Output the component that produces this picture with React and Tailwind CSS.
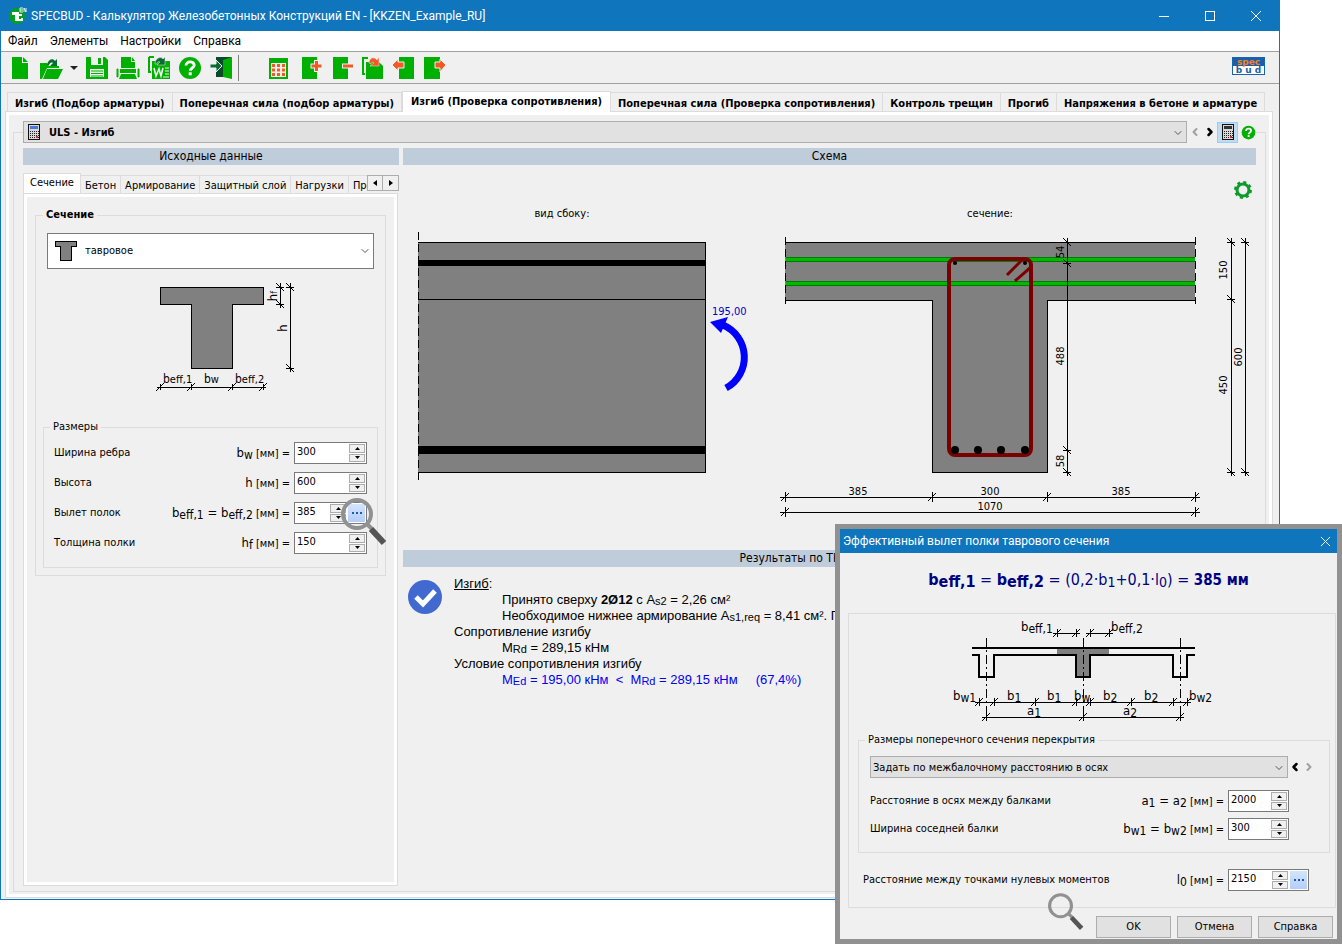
import { useState } from 'react';
import { ChevronDown, ChevronLeft, ChevronRight } from 'lucide-react';

const GREEN = '#00b000';
const ORANGE = '#f15a24';

const mainTabs = [
  'Изгиб (Подбор арматуры)',
  'Поперечная сила (подбор арматуры)',
  'Изгиб (Проверка сопротивления)',
  'Поперечная сила (Проверка сопротивления)',
  'Контроль трещин',
  'Прогиб',
  'Напряжения в бетоне и арматуре',
];

const dataTabs = ['Сечение', 'Бетон', 'Армирование', 'Защитный слой', 'Нагрузки', 'Прогиб'];

/* ---------- toolbar icons ---------- */

const Icon = ({ children }) => (
  <svg width="24" height="24" viewBox="0 0 24 24" className="shrink-0">{children}</svg>
);

const QuestionDisc = ({ size }) => (
  <svg width={size} height={size} viewBox="0 0 24 24">
    <circle cx="12" cy="12" r="11" fill={GREEN} />
    <path d="M8 9.5C8 4.5 16.2 4.8 16.2 9.2C16.2 12 12.2 12 12.2 14.8" fill="none" stroke="#fff" strokeWidth="2.8" />
    <rect x="10.7" y="16.3" width="3" height="3" fill="#fff" />
  </svg>
);

const fileIcons = {
  new: <Icon><path d="M4 1h10v6h6v16H4z" fill={GREEN} /><path d="M15 1l5 5h-5z" fill={GREEN} /></Icon>,
  open: (
    <Icon>
      <path d="M1 7h7l2 3h10v2H8L3 23H1z" fill={GREEN} />
      <path d="M8 13h16l-5 10H4z" fill={GREEN} />
      <path d="M8 9C9 3 14 2 16 5l2-2v7h-7l3-3c-2-1-3 0-4 2z" fill="#0a6b35" />
    </Icon>
  ),
  save: (
    <Icon>
      <path d="M1 1h19l3 3v19H1z" fill={GREEN} />
      <path d="M6 1h12v8H6zM5 13h14v8H5z" fill="#f0f0f0" />
      <path d="M13 2h3v6h-3z" fill={GREEN} />
      <path d="M6 15h12M6 17.500h12M6 20h12" stroke={GREEN} />
    </Icon>
  ),
  print: (
    <Icon>
      <path d="M5 1h10v5h4v6H5z" fill={GREEN} />
      <path d="M16 1l3 4h-3z" fill={GREEN} />
      <path d="M1 13h1v8H1zM22 13h1v8h-1z" fill={GREEN} stroke={GREEN} />
      <path d="M4 13h16v4H4z" fill={GREEN} />
      <path d="M5 18h14l2 5H3z" fill={GREEN} />
    </Icon>
  ),
  word: (
    <Icon>
      <path d="M2 1h5M2 1v15M1 16h3" stroke={GREEN} strokeWidth="2" fill="none" />
      <path d="M5 5h18v18H5z" fill={GREEN} />
      <path d="M7 12l2 8 3-7 2 7 2-8" stroke="#f0f0f0" strokeWidth="1.600" fill="none" />
      <path d="M18 12h4M18 15h4M18 18h4M16 21h6" stroke="#f0f0f0" />
      <path d="M8 8C8 2 14 0 16 3l2-2v8h-8l3-3c-2-1-3 0-3 2z" fill="#0a6b35" stroke="#f0f0f0" strokeWidth="0.500" />
    </Icon>
  ),
  help: <QuestionDisc size={24} />,
  exit: (
    <Icon>
      <path d="M7 1h15v3H7zM7 1h7v20H7z" fill="#0a4a2a" />
      <path d="M14 4l9-3v22l-9-2z" fill={GREEN} />
      <path d="M1 8h6V4l6 6-6 6v-4H1z" fill="#0a6b35" stroke="#f0f0f0" />
    </Icon>
  ),
};

const elementIcons = {
  table: (
    <Icon>
      <path d="M2 2h19v21H2z" fill={GREEN} />
      <path d="M4 7h15v14H4z" fill="#f0f0f0" />
      <path d="M5 9.500h13M5 14h13M5 18.500h13" stroke={ORANGE} strokeWidth="3" strokeDasharray="3 2" />
    </Icon>
  ),
  add: (
    <Icon>
      <path d="M4 1h15v22H4z" fill={GREEN} />
      <path d="M18.500 4v12M12.500 10h12" stroke="#f0f0f0" strokeWidth="5" />
      <path d="M18.500 5v10M13.500 10h10" stroke={ORANGE} strokeWidth="3" />
    </Icon>
  ),
  remove: (
    <Icon>
      <path d="M4 1h15v22H4z" fill={GREEN} />
      <path d="M13 10h12" stroke="#f0f0f0" strokeWidth="5" />
      <path d="M14 10h10" stroke={ORANGE} strokeWidth="3" />
    </Icon>
  ),
  copy: (
    <Icon>
      <path d="M3 2h5M3 1v17M2 18h3" stroke={GREEN} strokeWidth="2" fill="none" />
      <path d="M6 6h13l4 4v13H6z" fill={GREEN} />
      <path d="M9 7C9 2 14 0 17 4l2-3v9h-9l4-3c-2-1-3-1-3 1z" fill={ORANGE} stroke="#f0f0f0" strokeWidth="0.500" />
    </Icon>
  ),
  prev: (
    <Icon>
      <path d="M8 1h15v22H8z" fill={GREEN} />
      <path d="M1 9l6-6v3h6v6H7v3z" fill={ORANGE} stroke="#f0f0f0" />
    </Icon>
  ),
  next: (
    <Icon>
      <path d="M2 1h16v22H2z" fill={GREEN} />
      <path d="M24 9l-6-6v3h-5v6h5v4z" fill={ORANGE} stroke="#f0f0f0" />
    </Icon>
  ),
};

const Calculator = ({ screen }) => (
  <svg width="12" height="16" viewBox="0 0 12 16" shapeRendering="crispEdges">
    <rect width="12" height="16" rx="1" fill="#111" />
    <rect x="1" y="1" width="10" height="14" fill="#d8d8d8" />
    <rect x="2" y="2" width="8" height="3" fill={screen} />
    <path d="M2 7h9M2 9h9M2 11h9M2 13h9" stroke="#222" strokeDasharray="1 1" />
    <path d="M8 13h2" stroke="#e02040" strokeWidth="2" />
  </svg>
);

const Magnifier = ({ className }) => (
  <svg width="46" height="48" viewBox="0 0 46 48" className={className}>
    <circle cx="16" cy="16" r="14" fill="none" stroke="#919191" strokeWidth="4" />
    <path d="M26 26l5 5" stroke="#919191" strokeWidth="4" />
    <path d="M30 31l13 14" stroke="#555" strokeWidth="6" />
  </svg>
);

/* ---------- form parts ---------- */

const Sub = ({ children }) => <sub className="text-[12px] leading-none -bottom-[2px]">{children}</sub>;

const SpinButtons = ({ onStep }) => (
  <span className="flex flex-col gap-px w-4 my-px mr-px">
    <button type="button" aria-label="Больше" onClick={() => onStep(1)} className="flex-1 flex items-center justify-center border border-[#adadad] bg-[#f0f0f0]">
      <svg width="5" height="3" viewBox="0 0 5 3"><path d="M0 3L2.500 0L5 3z" /></svg>
    </button>
    <button type="button" aria-label="Меньше" onClick={() => onStep(-1)} className="flex-1 flex items-center justify-center border border-[#adadad] bg-[#f0f0f0]">
      <svg width="5" height="3" viewBox="0 0 5 3"><path d="M0 0L2.500 3L5 0z" /></svg>
    </button>
  </span>
);

const NumberField = ({ id, initial, width, children }) => {
  const [value, setValue] = useState(initial);
  return (
    <span className={`flex h-[22px] shrink-0 border border-[#7a7a7a] bg-white ${width}`}>
      <input id={id} value={value} onChange={(e) => setValue(e.target.value)} className="min-w-0 flex-1 pl-0.5 pb-0.5 bg-transparent outline-none" />
      <SpinButtons onStep={(d) => setValue(String(Number(value) + d))} />
      {children}
    </span>
  );
};

const DotsButton = () => (
  <button type="button" aria-label="Рассчитать" className="w-[17px] m-px flex items-center justify-center gap-0.5 bg-linear-to-b from-[#d4e4fc] to-[#b4cdf8]">
    <span className="size-0.5 bg-[#1560b0]" />
    <span className="size-0.5 bg-[#1560b0]" />
    <span className="size-0.5 bg-[#1560b0]" />
  </button>
);

const Row = ({ id, label, symbol, className = '', children }) => (
  <div className={`flex items-center ${className}`}>
    <label htmlFor={id} className="flex-1">{label}</label>
    <span className="mr-1 whitespace-pre">
      <span className="text-[13px]">{symbol}</span> [мм] =
    </span>
    {children}
  </div>
);

const BarTitle = ({ children }) => (
  <h2 className="h-[17px] leading-[17px] bg-[#bfccda] text-center text-[12px]">{children}</h2>
);

/* ---------- drawings ---------- */

// Dimension line with slanted ticks, along x (y fixed) or along y (x fixed)
const DimX = ({ y, at, tick = 5 }) => (
  <g stroke="#000">
    <path d={`M${at[0] - tick} ${y}H${at[at.length - 1] + tick}`} />
    {at.map((x) => (
      <path key={x} d={`M${x} ${y - tick}V${y + tick}M${x - 4} ${y + 4}L${x + 4} ${y - 4}`} />
    ))}
  </g>
);

const DimY = ({ x, at }) => (
  <g stroke="#000">
    <path d={`M${x} ${at[0] - 4}V${at[at.length - 1] + 4}`} />
    {at.map((y) => (
      <path key={y} d={`M${x - 4} ${y}H${x + 4}M${x - 4} ${y - 4}L${x + 4} ${y + 4}`} />
    ))}
  </g>
);

const VText = ({ x, y, children }) => (
  <text transform={`translate(${x} ${y}) rotate(-90)`} textAnchor="middle">{children}</text>
);

const SymbolText = ({ x, y, main, sub }) => (
  <text x={x} y={y} fontSize="13">
    {main}
    <tspan dy="2" fontSize="12">{sub}</tspan>
  </text>
);

const TeeSketch = () => (
  <svg width="145" height="115" viewBox="155 280 145 115" shapeRendering="crispEdges" fontSize="11" className="overflow-visible">
    <path d="M160 287H263V304H232V368H191V304H160Z" fill="#808080" stroke="#000" />
    <DimY x={280} at={[287, 304]} />
    <DimY x={290} at={[287, 368]} />
    <DimX y={387} at={[160, 191, 232, 263]} tick={3} />
    <g fontSize="13">
      <VText x={277} y={296}>h<tspan fontSize="9">f</tspan></VText>
      <VText x={287} y={328}>h</VText>
    </g>
    <text x="163" y="383" fontSize="12">b<tspan fontSize="11">eff,1</tspan></text>
    <text x="204" y="383" fontSize="12">b<tspan fontSize="11">w</tspan></text>
    <text x="235" y="383" fontSize="12">b<tspan fontSize="11">eff,2</tspan></text>
  </svg>
);

const SideView = () => (
  <svg width="350" height="350" viewBox="403 200 350 350" fontSize="11" className="shrink-0">
    <text x="562" y="217" textAnchor="middle">вид сбоку:</text>
    <g shapeRendering="crispEdges">
      <path d="M418 242H705V472H418" fill="#808080" stroke="#000" />
      <path d="M418 299H705" stroke="#000" />
      <rect x="418" y="260" width="288" height="6" />
      <rect x="418" y="446" width="288" height="8" />
      <path d="M418 232V480" stroke="#000" strokeDasharray="8 4" />
    </g>
    <text x="712" y="315" fill="#0000c8">195,00</text>
    <path d="M723 325A35 35 0 0 1 726 388" fill="none" stroke="#00f" strokeWidth="7" />
    <path d="M710 322L728 317L721 333Z" fill="#00f" />
  </svg>
);

const CrossSection = () => (
  <svg width="476" height="350" viewBox="780 200 476 350" fontSize="11" className="shrink-0">
    <text x="990" y="217" textAnchor="middle">сечение:</text>
    <g shapeRendering="crispEdges">
      <path d="M785 242H1195V300H1047V472H932V300H785Z" fill="#808080" />
      <path d="M785 242H1195M785 300H932V472H1047V300H1195" fill="none" stroke="#000" />
      <path d="M785 237V304M1195 237V304" stroke="#000" strokeDasharray="8 4" />
      <rect x="786" y="257" width="409" height="5" fill="#007a00" />
      <rect x="786" y="258" width="409" height="3" fill="#00b800" />
      <rect x="786" y="281" width="409" height="5" fill="#007a00" />
      <rect x="786" y="282" width="409" height="3" fill="#00b800" />
    </g>
    <rect x="949" y="259" width="82" height="196" rx="6" fill="none" stroke="#7a0000" strokeWidth="4" />
    <path d="M1022 260L1007 275M1031 267L1015 281" stroke="#7a0000" strokeWidth="3" />
    <circle cx="955" cy="263" r="2" />
    <circle cx="1025" cy="263" r="2" />
    {[955, 978, 1001, 1025].map((x) => <circle key={x} cx={x} cy="450" r="4" />)}
    <g shapeRendering="crispEdges">
      <DimY x={1067} at={[242, 263, 450, 472]} />
      <DimY x={1231} at={[242, 299, 472]} />
      <DimY x={1245} at={[242, 472]} />
      <DimX y={497} at={[785, 932, 1047, 1195]} />
      <DimX y={512} at={[785, 1195]} />
    </g>
    <VText x={1064} y={252}>54</VText>
    <VText x={1064} y={356}>488</VText>
    <VText x={1064} y={461}>58</VText>
    <VText x={1227} y={270}>150</VText>
    <VText x={1227} y={385}>450</VText>
    <VText x={1242} y={357}>600</VText>
    <g textAnchor="middle">
      <text x="858" y="495">385</text>
      <text x="990" y="495">300</text>
      <text x="1121" y="495">385</text>
      <text x="990" y="510">1070</text>
    </g>
  </svg>
);

const FloorSketch = () => (
  <svg width="270" height="106" viewBox="948 620 270 106" shapeRendering="crispEdges" className="overflow-visible">
    <path d="M1057 648H1109V655H1090V677H1076V655H1057Z" fill="#808080" />
    <path
      d="M972 648H1195M972 655H979V677H994V655H1076V677H1090V655H1173V677H1187V655H1195"
      fill="none"
      stroke="#000"
      strokeWidth="2"
    />
    <path d="M986 638V722M1083 638V722M1180 638V722" stroke="#000" strokeDasharray="9 3 2 3" />
    <DimX y={633} at={[1057, 1076]} tick={4} />
    <DimX y={633} at={[1090, 1109]} tick={4} />
    <DimX y={702} at={[979, 994, 1035, 1076, 1090, 1131, 1173, 1187]} tick={4} />
    <DimX y={717} at={[986, 1083, 1180]} tick={4} />
    <SymbolText x={1021} y={631} main="b" sub="eff,1" />
    <SymbolText x={1111} y={631} main="b" sub="eff,2" />
    <SymbolText x={953} y={700} main="b" sub="w1" />
    <SymbolText x={1007} y={700} main="b" sub="1" />
    <SymbolText x={1047} y={700} main="b" sub="1" />
    <SymbolText x={1074} y={700} main="b" sub="w" />
    <SymbolText x={1103} y={700} main="b" sub="2" />
    <SymbolText x={1144} y={700} main="b" sub="2" />
    <SymbolText x={1189} y={700} main="b" sub="w2" />
    <SymbolText x={1027} y={715} main="a" sub="1" />
    <SymbolText x={1123} y={715} main="a" sub="2" />
  </svg>
);

/* ---------- main window ---------- */

const TitleBar = () => (
  <header className="h-[31px] flex items-center pl-2 bg-[#0f75bc] text-white font-[Roboto,sans-serif]">
    <svg width="18" height="18" viewBox="0 0 18 18" className="mr-1">
      <circle cx="8" cy="9" r="8" fill="#00a020" />
      <path d="M3 5h7v3H8v6H6V8H3z" fill="#fff" />
      <path d="M13 8H9v5h4v-2" fill="none" stroke="#fff" strokeWidth="2" />
      <path d="M14 1h-3v4h3M11 3h3M15 5V1l2 4V1" fill="none" stroke="#dff5df" />
    </svg>
    <h1 className="flex-1 text-[12px]">SPECBUD - Калькулятор Железобетонных Конструкций EN - [KKZEN_Example_RU]</h1>
    <button type="button" aria-label="Свернуть" className="w-[46px] flex justify-center">
      <svg width="12" height="12" viewBox="0 0 12 12" shapeRendering="crispEdges"><path d="M1 6h10" stroke="#fff" /></svg>
    </button>
    <button type="button" aria-label="Развернуть" className="w-[46px] flex justify-center">
      <svg width="12" height="12" viewBox="0 0 12 12" shapeRendering="crispEdges"><path d="M1 1h9v9h-9z" fill="none" stroke="#fff" /></svg>
    </button>
    <button type="button" aria-label="Закрыть" className="w-[46px] flex justify-center">
      <svg width="12" height="12" viewBox="0 0 12 12"><path d="M1 1l10 10M11 1L1 11" stroke="#fff" /></svg>
    </button>
  </header>
);

const Toolbar = () => (
  <div className="h-[33px] flex items-center pl-[3px] pr-3.5 border-y border-[#a0a0a0] bg-[#f0f0f0]">
    {Object.entries(fileIcons).map(([name, icon]) => (
      <span key={name} className="flex items-center">
        <button type="button" aria-label={name} className="w-[31px] flex justify-center">{icon}</button>
        {name === 'open' && (
          <button type="button" aria-label="recent" className="w-[15px] flex justify-center">
            <svg width="8" height="4" viewBox="0 0 8 4"><path d="M0 0h8L4 4z" fill="#222" /></svg>
          </button>
        )}
      </span>
    ))}
    <span className="w-px h-[26px] ml-0.5 mr-6 bg-[#808080]" />
    {Object.entries(elementIcons).map(([name, icon]) => (
      <button key={name} type="button" aria-label={name} className="w-[31px] flex justify-center">{icon}</button>
    ))}
    <a href="#specbud" className="self-start mt-[5px] ml-auto w-[33px] h-[18px] border border-[#1565b0] bg-white flex flex-col text-center font-['DejaVu_Sans',sans-serif] font-bold text-[9px]">
      <span className="h-2 leading-2 bg-[#1b5fa8] text-[#f58220]">spec</span>
      <span className="h-2 leading-2 text-[#1b5fa8]">b u d</span>
    </a>
  </div>
);

const MainTabs = () => {
  const [active, setActive] = useState(2);
  return (
    <div role="tablist" className="flex items-end pl-0.5 font-bold text-[11px]">
      {mainTabs.map((tab, i) => (
        <button
          key={tab}
          type="button"
          role="tab"
          aria-selected={i === active}
          onClick={() => setActive(i)}
          className={
            i === active
              ? 'h-[21px] px-2 -mb-px relative whitespace-nowrap bg-white border border-b-0 border-[#dcdcdc]'
              : 'h-[19px] pt-[3px] px-[7px] whitespace-nowrap border border-b-0 border-l-0 first:border-l border-[#dcdcdc]'
          }
        >
          {tab}
        </button>
      ))}
    </div>
  );
};

const ElementBar = () => (
  <div className="flex items-center">
    <div className="relative flex-1">
      <select aria-label="Элемент" className="w-full h-[22px] pt-[3px] pl-[25px] appearance-none border border-[#adadad] bg-[#e1e1e1] font-bold outline-none">
        <option>ULS - Изгиб</option>
      </select>
      <span className="absolute left-[5px] top-[3px]"><Calculator screen="#4a78e0" /></span>
      <ChevronDown size={12} strokeWidth={2} className="absolute right-[3px] top-[6px] text-[#555] pointer-events-none" />
    </div>
    <button type="button" aria-label="Назад" className="w-4 flex justify-center text-[#a0a0a0]"><ChevronLeft size={12} strokeWidth={4} /></button>
    <button type="button" aria-label="Вперёд" className="w-3.5 flex justify-center"><ChevronRight size={12} strokeWidth={5} /></button>
    <button type="button" aria-label="Калькулятор" className="w-[21px] h-[21px] flex items-center justify-center border border-[#99cdf5] bg-[#bfdcf2]">
      <Calculator screen="#333" />
    </button>
    <button type="button" aria-label="Справка" className="w-[18px] flex justify-end"><QuestionDisc size={15} /></button>
  </div>
);

const InputPanel = () => {
  const [active, setActive] = useState(0);
  return (
    <section className="w-[376px] shrink-0 flex flex-col">
      <BarTitle>Исходные данные</BarTitle>
      <div className="flex items-start mt-2">
        <div role="tablist" className="flex-1 min-w-0 overflow-hidden flex items-end h-5">
          {dataTabs.map((tab, i) => (
            <button
              key={tab}
              type="button"
              role="tab"
              aria-selected={i === active}
              onClick={() => setActive(i)}
              className={
                i === active
                  ? 'h-5 px-[6px] whitespace-nowrap bg-white border border-b-0 border-[#dcdcdc]'
                  : 'h-[18px] pt-0.5 px-1 whitespace-nowrap border border-b-0 border-l-0 border-[#dcdcdc]'
              }
            >
              {tab}
            </button>
          ))}
        </div>
        <button type="button" aria-label="Влево" className="mt-0.5 w-4 h-4 flex items-center justify-center border border-[#adadad]">
          <svg width="4" height="6" viewBox="0 0 4 6"><path d="M4 0v6L0 3z" /></svg>
        </button>
        <button type="button" aria-label="Вправо" className="mt-0.5 w-4 h-4 flex items-center justify-center border border-l-0 border-[#adadad]">
          <svg width="4" height="6" viewBox="0 0 4 6"><path d="M0 0v6L4 3z" /></svg>
        </button>
      </div>
      <div className="flex-1 border border-[#dcdcdc] bg-white p-[3px] mr-px">
        <div className="h-full bg-[#f0f0f0] px-2 pt-[10px]">
          <fieldset className="border border-[#dcdcdc] px-[7px] pb-[7px]">
            <legend className="px-[3px] font-bold leading-4">Сечение</legend>
            <div className="relative mt-[10px] mx-1">
              <select aria-label="Тип сечения" className="w-full h-9 pl-[37px] appearance-none border border-[#7a7a7a] bg-white outline-none">
                <option>тавровое</option>
              </select>
              <svg width="24" height="22" viewBox="0 0 24 22" shapeRendering="crispEdges" className="absolute left-[7px] top-[7px]">
                <path d="M1 1H22V6H17V20H6V6H1Z" fill="#808080" stroke="#000" />
              </svg>
              <ChevronDown size={12} strokeWidth={2} className="absolute right-[3px] top-3 text-[#555] pointer-events-none" />
            </div>
            <div className="flex justify-center mt-[11px] pl-[34px]">
              <TeeSketch />
            </div>
            <fieldset className="border border-[#dcdcdc] px-[10px] pb-[13px] mt-6">
              <legend className="-ml-1 px-[3px] leading-4">Размеры</legend>
              <div className="flex flex-col gap-2 mt-[7px]">
                <Row id="bw" label="Ширина ребра" symbol={<>b<Sub>w</Sub></>}>
                  <NumberField id="bw" initial="300" width="w-[73px]" />
                </Row>
                <Row id="h" label="Высота" symbol="h">
                  <NumberField id="h" initial="600" width="w-[73px]" />
                </Row>
                <Row id="beff" label="Вылет полок" symbol={<>b<Sub>eff,1</Sub> = b<Sub>eff,2</Sub></>}>
                  <span className="relative">
                    <NumberField id="beff" initial="385" width="w-[73px]">
                      <DotsButton />
                    </NumberField>
                    <Magnifier className="absolute left-[47px] -top-1 pointer-events-none" />
                  </span>
                </Row>
                <Row id="hf" label="Толщина полки" symbol={<>h<Sub>f</Sub></>}>
                  <NumberField id="hf" initial="150" width="w-[73px]" />
                </Row>
              </div>
            </fieldset>
          </fieldset>
        </div>
      </div>
    </section>
  );
};

const ResultSub = ({ children }) => <sub className="text-[11px] leading-none bottom-0 align-[-1px]">{children}</sub>;

const Results = () => (
  <div className="flex pt-[9px] pl-[5px] font-['Liberation_Sans',sans-serif] text-[13px] leading-4 whitespace-nowrap">
    <svg width="34" height="34" viewBox="0 0 34 34" className="mt-1 mr-3 shrink-0">
      <circle cx="17" cy="17" r="17" fill="#4169d0" />
      <path d="M8 17l7 7 12-13" fill="none" stroke="#fff" strokeWidth="5" />
    </svg>
    <div>
      <p><u>Изгиб</u>:</p>
      <p className="pl-12">Принято сверху <b>2Ø12</b> с A<ResultSub>s2</ResultSub> = 2,26 см²</p>
      <p className="pl-12">Необходимое нижнее армирование A<ResultSub>s1,req</ResultSub> = 8,41 см². Принято 8,62 см²</p>
      <p>Сопротивление изгибу</p>
      <p className="pl-12">M<ResultSub>Rd</ResultSub> = 289,15 кНм</p>
      <p>Условие сопротивления изгибу</p>
      <p className="pl-12 whitespace-pre text-[#0000f0]">
        M<ResultSub>Ed</ResultSub> = 195,00 кНм  &lt;  M<ResultSub>Rd</ResultSub> = 289,15 кНм     (67,4%)
      </p>
    </div>
  </div>
);

const SchemePanel = () => (
  <section className="flex-1 min-w-0 flex flex-col">
    <BarTitle>Схема</BarTitle>
    <div className="flex justify-end pt-4 pr-1 h-[35px]">
      <button type="button" aria-label="Настройки схемы" className="size-[18px]">
        <svg width="18" height="18" viewBox="0 0 18 18">
          <circle cx="9" cy="9" r="7" fill="none" stroke="#0f9a2c" strokeWidth="4" strokeDasharray="2.750" />
          <circle cx="9" cy="9" r="6" fill="none" stroke="#0f9a2c" strokeWidth="3" />
        </svg>
      </button>
    </div>
    <div className="flex justify-between">
      <SideView />
      <CrossSection />
    </div>
    <BarTitle>Результаты по ТКП EN 1992-1-1</BarTitle>
    <Results />
  </section>
);

/* ---------- dialog ---------- */

const FormulaSub = ({ children }) => <sub className="text-[14px] leading-none bottom-0 align-[-2px]">{children}</sub>;
const FormulaIndex = ({ children }) => <sub className="text-[16px] leading-none bottom-0 align-[-2px]">{children}</sub>;

const FlangeDialog = () => (
  <div role="dialog" aria-label="Эффективный вылет полки таврового сечения" className="absolute right-0 bottom-0 w-[507px] border-[5px] border-[#919191] bg-[#f0f0f0]">
    <header className="h-6 pl-[3px] pr-1.5 flex items-center justify-between bg-[#0f75bc] text-white text-[12px] font-[Roboto,sans-serif]">
      <h2>Эффективный вылет полки таврового сечения</h2>
      <button type="button" aria-label="Закрыть">
        <svg width="11" height="11" viewBox="0 0 12 12"><path d="M1 1l10 10M11 1L1 11" stroke="#fff" /></svg>
      </button>
    </header>
    <p className="pt-[15px] h-[60px] text-center text-[16px] text-[#000080]">
      <b>b<FormulaIndex>eff,1</FormulaIndex></b> = <b>b<FormulaIndex>eff,2</FormulaIndex></b> = (0,2·b
      <FormulaSub>1</FormulaSub>+0,1·l<FormulaSub>0</FormulaSub>) = <b className="text-[15px]">385 мм</b>
    </p>
    <div className="ml-2 mr-px border border-[#dcdcdc] pt-1.5 pb-4">
      <div className="flex justify-center pr-[18px]">
        <FloorSketch />
      </div>
      <fieldset className="ml-[9px] mr-[5px] mt-[6px] border border-[#dcdcdc] pl-[11px] pb-3">
        <legend className="-ml-[5px] px-[3px] leading-4">Размеры поперечного сечения перекрытия</legend>
        <div className="flex items-center mt-2">
          <div className="relative w-[418px]">
            <select aria-label="Способ задания" className="w-full h-[22px] pt-0.5 pl-0.5 appearance-none border border-[#adadad] bg-[#e1e1e1] outline-none">
              <option>Задать по межбалочному расстоянию в осях</option>
            </select>
            <ChevronDown size={12} strokeWidth={2} className="absolute right-[3px] top-[6px] text-[#555] pointer-events-none" />
          </div>
          <button type="button" aria-label="Назад" className="w-3.5 flex justify-center"><ChevronLeft size={12} strokeWidth={5} /></button>
          <button type="button" aria-label="Вперёд" className="w-3.5 flex justify-center text-[#a0a0a0]"><ChevronRight size={12} strokeWidth={4} /></button>
        </div>
        <Row id="a" label="Расстояние в осях между балками" symbol={<>a<Sub>1</Sub> = a<Sub>2</Sub></>} className="mt-3 w-[419px]">
          <NumberField id="a" initial="2000" width="w-[61px]" />
        </Row>
        <Row id="bwn" label="Ширина соседней балки" symbol={<>b<Sub>w1</Sub> = b<Sub>w2</Sub></>} className="mt-1.5 w-[419px]">
          <NumberField id="bwn" initial="300" width="w-[61px]" />
        </Row>
      </fieldset>
      <Row id="l0" label="Расстояние между точками нулевых моментов" symbol={<>l<Sub>0</Sub></>} className="mt-4 ml-3.5 mr-[26px]">
        <NumberField id="l0" initial="2150" width="w-[81px]">
          <DotsButton />
        </NumberField>
      </Row>
    </div>
    <footer className="flex justify-end gap-1.5 pt-2 pr-1 pb-px">
      {['OK', 'Отмена', 'Справка'].map((name) => (
        <button key={name} type="button" className="w-[75px] h-[22px] border border-[#adadad] bg-[#e1e1e1]">{name}</button>
      ))}
    </footer>
    <Magnifier className="absolute left-[208px] bottom-[3px] w-9 pointer-events-none" />
  </div>
);

const App = () => (
  <div className="relative min-h-screen flex bg-white pr-[62px] pb-11 overflow-hidden text-black text-[11px] font-['DejaVu_Sans_Condensed','Noto_Sans',sans-serif]">
    <main className="flex-1 min-w-0 flex flex-col border border-t-0 border-[#0f75bc] bg-[#f0f0f0]">
      <TitleBar />
      <nav className="h-5 flex items-center gap-3 pl-[7px] bg-white text-[12px] font-[Roboto,sans-serif]">
        {['Файл', 'Элементы', 'Настройки', 'Справка'].map((item) => (
          <button key={item} type="button">{item}</button>
        ))}
      </nav>
      <Toolbar />
      <div className="flex-1 flex flex-col pt-[7px] px-1 pb-px">
        <MainTabs />
        <div className="flex-1 flex border border-[#dcdcdc] bg-white p-[3px] mr-0.5">
          <div className="flex-1 min-w-0 flex bg-[#f0f0f0] pl-1 pr-[3px] pt-1.5 pb-0.5">
            <fieldset className="flex-1 min-w-0 flex flex-col border border-[#dcdcdc] px-[9px] pb-[5px]">
              <legend className="w-full"><ElementBar /></legend>
              <div className="flex-1 flex gap-1 mt-[5px]">
                <InputPanel />
                <SchemePanel />
              </div>
            </fieldset>
          </div>
        </div>
      </div>
    </main>
    <FlangeDialog />
  </div>
);

export default App;
